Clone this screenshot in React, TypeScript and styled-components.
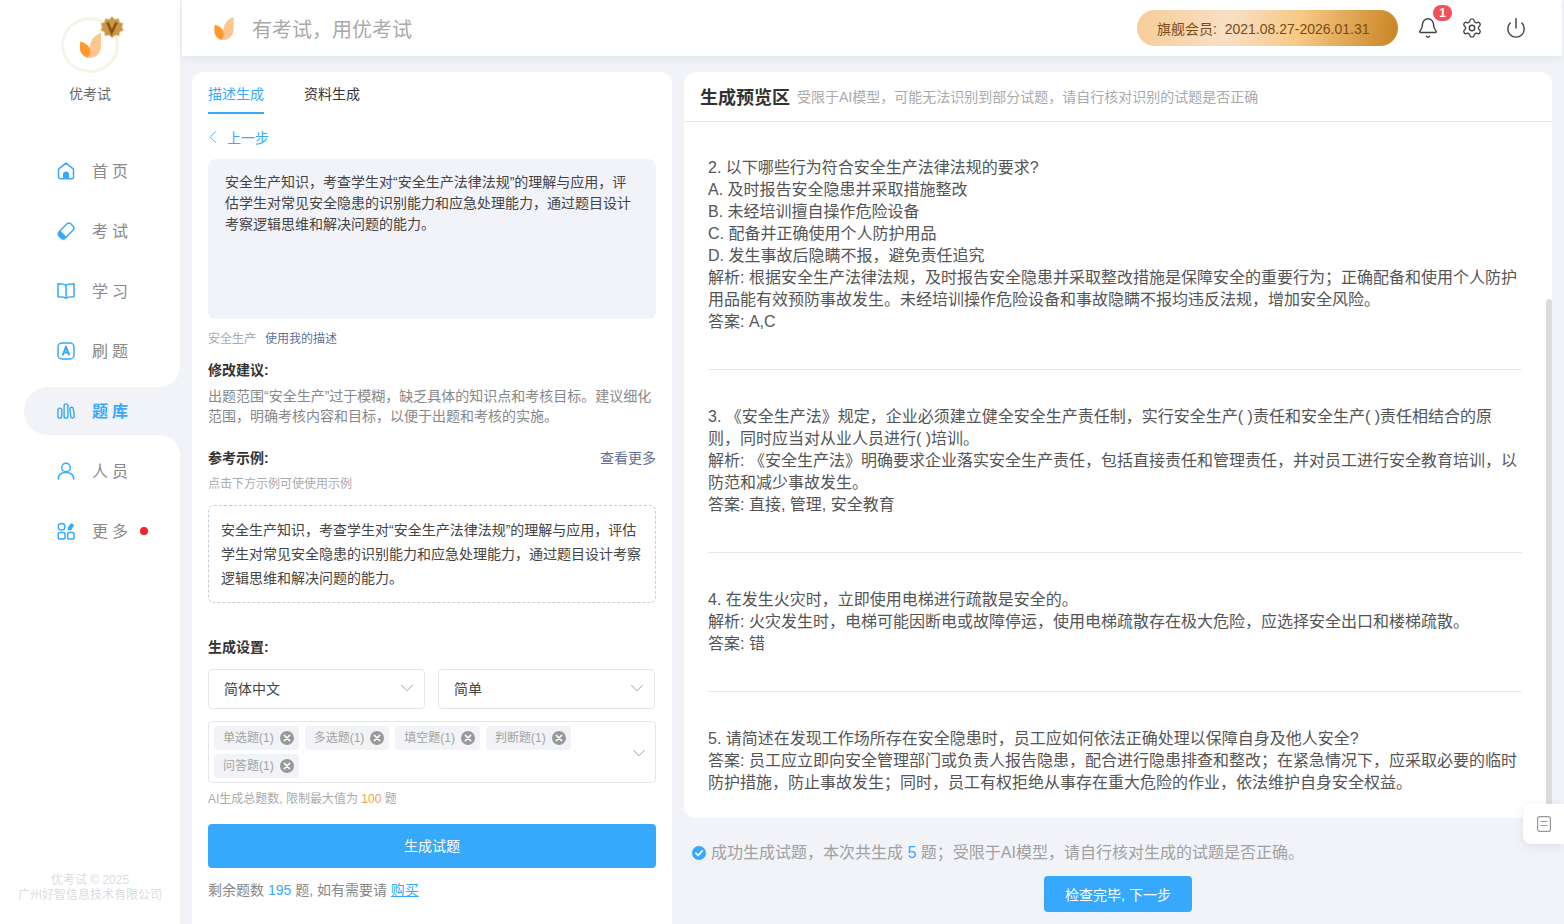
import React from 'react';
import styled, { createGlobalStyle } from 'styled-components';
import { Bell, Settings, Power, ChevronDown, ChevronLeft } from 'lucide-react';

const BLUE = '#36a9fd';
const PAGE = '#f1f3f8';

const Global = createGlobalStyle`
  html, body { margin: 0; padding: 0; height: 924px; overflow: hidden; background: ${PAGE}; }
  body { font-family: "Liberation Sans", "Noto Sans CJK SC", sans-serif; }
  * { box-sizing: border-box; }
`;

const Page = styled.div`
  display: flex;
  width: 1564px;
  height: 924px;
  position: relative;
  overflow: hidden;
`;

const Sidebar = styled.aside`
  width: 180px;
  flex: none;
  height: 924px;
  background: #fff;
  display: flex;
  flex-direction: column;
  padding-top: 17px;
`;

const LogoWrap = styled.div`
  align-self: center;
  width: 58px;
  height: 56px;
  border-radius: 50%;
  border: 3px solid #f8f2e8;
  display: flex;
  align-items: center;
  justify-content: center;
  position: relative;
`;

const Crown = styled.svg`
  position: absolute;
  right: -8px;
  top: -4px;
`;

const BrandName = styled.div`
  margin-top: 11px;
  text-align: center;
  font-size: 14px;
  line-height: 20px;
  color: #666;
`;

const Nav = styled.nav`
  margin-top: 43px;
  display: flex;
  flex-direction: column;
  gap: 12px;
`;

const NavItem = styled.div<{ $active?: boolean }>`
  position: relative;
  margin-left: 24px;
  height: 48px;
  padding-left: 33px;
  display: flex;
  align-items: center;
  gap: 17px;
  font-size: 16px;
  letter-spacing: 4px;
  color: ${p => (p.$active ? BLUE : '#8a8a8a')};
  font-weight: ${p => (p.$active ? 600 : 400)};
  border-radius: 24px 0 0 24px;
  background: ${p => (p.$active ? PAGE : 'transparent')};
  ${p =>
    p.$active
      ? `
    &::before, &::after {
      content: '';
      position: absolute;
      right: 0;
      width: 20px;
      height: 20px;
    }
    &::before { top: -20px; background: radial-gradient(circle at 0 0, #fff 19.5px, ${PAGE} 20px); }
    &::after { bottom: -20px; background: radial-gradient(circle at 0 100%, #fff 19.5px, ${PAGE} 20px); }
  `
      : ''}
`;

const NavLabel = styled.span`
  padding-bottom: 2px;
`;

const RedDot = styled.span`
  width: 8px;
  height: 8px;
  border-radius: 50%;
  background: #f5222d;
  margin-left: -9px;
`;

const SideFooter = styled.div`
  margin-top: auto;
  padding-bottom: 21px;
  text-align: center;
  font-size: 12px;
  line-height: 15px;
  color: #dcdcdc;
`;

const Main = styled.div`
  flex: 1;
  min-width: 0;
  display: flex;
  flex-direction: column;
`;

const Header = styled.header`
  height: 56px;
  margin: 0 2px;
  background: #fff;
  box-shadow: 0 2px 8px rgba(40, 50, 90, 0.08);
  display: flex;
  align-items: center;
  padding: 0 34px 0 32px;
  position: relative;
`;

const HeaderTitle = styled.div`
  margin-left: 18px;
  font-size: 20px;
  color: #aaa;
`;

const Pill = styled.div`
  margin-left: auto;
  width: 261px;
  height: 36px;
  border-radius: 18px;
  padding-left: 20px;
  display: flex;
  align-items: center;
  font-size: 14px;
  white-space: pre;
  color: #7b4b16;
  background: linear-gradient(100deg, #f6cd96 0%, #f8dfc6 35%, #f6c985 62%, #c98322 100%);
`;

const HeaderIcons = styled.div`
  margin-left: 18px;
  display: flex;
  gap: 20px;
`;

const IconBtn = styled.div`
  position: relative;
  width: 24px;
  height: 24px;
  color: #444;
  display: flex;
  align-items: center;
  justify-content: center;
`;

const Badge = styled.span`
  position: absolute;
  left: 17px;
  top: -11px;
  width: 19px;
  height: 16px;
  border-radius: 8px;
  background: #f4505b;
  color: #fff;
  font-size: 12px;
  font-weight: 700;
  line-height: 16px;
  text-align: center;
`;

const Body = styled.div`
  flex: 1;
  min-height: 0;
  display: flex;
  gap: 12px;
  padding: 16px 12px 0;
`;

const LeftPanel = styled.section`
  width: 480px;
  flex: none;
  background: #fff;
  border-radius: 12px 12px 0 0;
  padding: 0 16px;
  display: flex;
  flex-direction: column;
`;

const Tabs = styled.div`
  display: flex;
  gap: 40px;
`;

const Tab = styled.div<{ $active?: boolean }>`
  height: 42px;
  padding-top: 12px;
  font-size: 14px;
  line-height: 20px;
  color: ${p => (p.$active ? BLUE : '#333')};
  border-bottom: 2px solid ${p => (p.$active ? BLUE : 'transparent')};
`;

const Back = styled.div`
  margin: 13px 0 0 -6px;
  height: 20px;
  display: flex;
  align-items: center;
  gap: 3px;
  font-size: 14px;
  color: ${BLUE};
`;

const Desc = styled.div`
  margin-top: 12px;
  height: 160px;
  background: ${PAGE};
  border-radius: 8px;
  padding: 13px 16px 12px 17px;
  font-size: 14px;
  line-height: 21px;
  color: #444;
`;

const MetaRow = styled.div`
  margin-top: 11px;
  display: flex;
  gap: 9px;
  font-size: 12px;
  line-height: 18px;
  color: #aaa;
`;

const MetaLink = styled.span`
  color: #5f7198;
`;

const SectionTitle = styled.div<{ $mt: number }>`
  margin-top: ${p => p.$mt}px;
  display: flex;
  justify-content: space-between;
  font-size: 14px;
  line-height: 20px;
  font-weight: 700;
  color: #333;
`;

const MoreLink = styled.span`
  font-weight: 400;
  color: #5f7198;
`;

const Advice = styled.div`
  margin-top: 6px;
  font-size: 14px;
  line-height: 20px;
  color: #888;
`;

const Hint = styled.div<{ $mt: number }>`
  margin-top: ${p => p.$mt}px;
  font-size: 12px;
  line-height: 18px;
  color: #aaa;
`;

const Orange = styled.span`
  color: #f79b4a;
`;

const Example = styled.div`
  margin-top: 12px;
  height: 98px;
  border: 1px dashed #c9cbd6;
  border-radius: 6px;
  padding: 12px;
  font-size: 14px;
  line-height: 24px;
  color: #444;
`;

const SelectRow = styled.div`
  margin-top: 12px;
  display: flex;
  gap: 13px;
  width: 447px;
`;

const Select = styled.div`
  flex: 1;
  height: 40px;
  border: 1px solid #e4e6ea;
  border-radius: 4px;
  padding: 0 6px 2px 15px;
  display: flex;
  align-items: center;
  justify-content: space-between;
  font-size: 14px;
  color: #444;
`;

const Multi = styled.div`
  margin-top: 12px;
  height: 62px;
  border: 1px solid #e4e6ea;
  border-radius: 4px;
  padding: 4px 30px 4px 5px;
  display: flex;
  flex-wrap: wrap;
  align-content: flex-start;
  gap: 4px 6px;
  position: relative;
`;

const MultiArrow = styled.span`
  position: absolute;
  right: 5px;
  top: 20px;
  display: flex;
`;

const TagChip = styled.div`
  height: 24px;
  background: #f2f3f6;
  border-radius: 4px;
  padding: 0 5px 0 9px;
  display: flex;
  align-items: center;
  gap: 6px;
  font-size: 12px;
  color: #a3a3a3;
`;

const TagLabel = styled.span`
  padding-bottom: 3px;
`;

const PrimaryBlock = styled.button`
  margin-top: 16px;
  height: 44px;
  width: 100%;
  border: 0;
  border-radius: 4px;
  padding: 0 0 2px;
  background: ${BLUE};
  color: #fff;
  font: inherit;
  font-size: 14px;
`;

const Remain = styled.div`
  margin-top: 12px;
  font-size: 14px;
  line-height: 20px;
  color: #888;
`;

const Blue = styled.span`
  color: ${BLUE};
`;

const BuyLink = styled.a`
  color: ${BLUE};
  text-decoration: underline;
`;

const RightCol = styled.section`
  width: 868px;
  flex: none;
  display: flex;
  flex-direction: column;
`;

const PreviewCard = styled.div`
  height: 746px;
  background: #fff;
  border-radius: 12px;
  overflow: hidden;
  position: relative;
  flex: none;
`;

const PreviewHead = styled.div`
  height: 50px;
  border-bottom: 1px solid #e8e8e8;
  padding: 0 16px 2px;
  display: flex;
  align-items: center;
  gap: 7px;
`;

const PreviewTitle = styled.div`
  font-size: 18px;
  font-weight: 700;
  color: #333;
`;

const PreviewSub = styled.div`
  font-size: 14px;
  color: #aaa;
  margin-top: 1px;
`;

const PreviewList = styled.div`
  padding: 0 30px 0 24px;
  margin-top: -1px;
`;

const Question = styled.div<{ $last?: boolean }>`
  padding: 36px 0 36px;
  border-bottom: ${p => (p.$last ? '0' : '1px solid #e8e8e8')};
  font-size: 16px;
  line-height: 22px;
  color: #555;
`;

const Thumb = styled.div`
  position: absolute;
  right: 0;
  top: 227px;
  bottom: 0;
  width: 6px;
  border-radius: 3px 3px 0 0;
  background: #dcdcdc;
`;

const Status = styled.div`
  margin: 24px 0 0 8px;
  display: flex;
  align-items: center;
  gap: 5px;
  font-size: 16px;
  line-height: 22px;
  color: #a0a0a0;
`;

const NextBtn = styled.button`
  margin-top: 12px;
  align-self: center;
  width: 148px;
  height: 36px;
  border: 0;
  border-radius: 4px;
  background: ${BLUE};
  color: #fff;
  font: inherit;
  font-size: 14px;
`;

const FloatTab = styled.div`
  position: absolute;
  right: 0;
  top: 804px;
  width: 41px;
  height: 40px;
  background: #fff;
  border-radius: 8px 0 0 8px;
  box-shadow: 0 2px 10px rgba(40, 50, 90, 0.1);
  display: flex;
  align-items: center;
  justify-content: center;
`;

const Leaf = ({ w, h }: { w: number; h: number }) => (
  <svg width={w} height={h} viewBox="0 0 21 25">
    <path d="M21 0V13C21 20 16 25 10 25C7 25 5 24 4 22.5C9 19 9.5 14 11 9C12.5 4.5 16.5 1.5 21 0Z" fill="#ffc78f" />
    <path d="M0.3 8.5C5 9.5 10 13 10.3 18C10.5 21 9 23.5 7.5 24.5C3 23.5 0 20 0 15C0 13 0 10.5 0.3 8.5Z" fill="#ff9a30" />
  </svg>
);

const blueStroke = { fill: 'none', stroke: BLUE, strokeWidth: 1.5, strokeLinecap: 'round' as const, strokeLinejoin: 'round' as const };

const HomeIcon = () => (
  <svg width="18" height="18" viewBox="0 0 18 18">
    <path d="M1.5 7.2L9 1.2L16.5 7.2V15a1.8 1.8 0 0 1-1.8 1.8H3.3A1.8 1.8 0 0 1 1.5 15Z" {...blueStroke} />
    <path d="M6 16.8V12.5a3 3 0 0 1 6 0v4.3Z" fill={BLUE} />
  </svg>
);
const EraserIcon = () => (
  <svg width="18" height="18" viewBox="0 0 18 18">
    <g transform="rotate(-45 9 9)">
      <rect x="0.6" y="4.6" width="16.8" height="8.8" rx="3" {...blueStroke} />
      <path d="M3.6 4.6H5.2V13.4H3.6A3 3 0 0 1 0.6 10.4V7.6A3 3 0 0 1 3.6 4.6Z" fill={BLUE} />
    </g>
  </svg>
);
const BookIcon = () => (
  <svg width="18" height="18" viewBox="0 0 18 18">
    <path d="M9 3.2C7.5 2 5 1.8 1 1.8V14.8C5 14.8 7.5 15 9 16.2C10.5 15 13 14.8 17 14.8V1.8C13 1.8 10.5 2 9 3.2ZM9 3.2V16.2" {...blueStroke} />
  </svg>
);
const PracticeIcon = () => (
  <svg width="18" height="18" viewBox="0 0 18 18">
    <rect x="1" y="1" width="16" height="16" rx="4" {...blueStroke} />
    <path d="M5.7 13.3L9 4.8L12.3 13.3M6.9 10.6H11.1" fill="none" stroke={BLUE} strokeWidth="2" strokeLinejoin="round" />
  </svg>
);
const BarsIcon = () => (
  <svg width="18" height="18" viewBox="0 0 19 18">
    <rect x="1" y="6" width="4" height="10.5" rx="2" {...blueStroke} />
    <rect x="7.5" y="1.5" width="4" height="15" rx="2" {...blueStroke} />
    <rect x="14" y="5" width="3.6" height="11.5" rx="1.8" transform="rotate(-7 15.8 10)" {...blueStroke} />
  </svg>
);
const PersonIcon = () => (
  <svg width="18" height="18" viewBox="0 0 18 18">
    <circle cx="9" cy="5.5" r="4.3" {...blueStroke} />
    <path d="M1.2 17C1.5 12.8 4.8 10.5 9 10.5S16.5 12.8 16.8 17" {...blueStroke} />
  </svg>
);
const MoreIcon = () => (
  <svg width="18" height="18" viewBox="0 0 18 18">
    <circle cx="4.6" cy="4.8" r="3.3" {...blueStroke} />
    <rect x="1.2" y="10.5" width="6.8" height="6.5" rx="1.8" {...blueStroke} />
    <rect x="10.6" y="10.5" width="6.4" height="6.5" rx="1.8" {...blueStroke} />
    <path d="M14 1.2L17.3 3L14 8.3H10.8V5.5Z" fill={BLUE} />
  </svg>
);

const CloseDot = () => (
  <svg width="14" height="14" viewBox="0 0 14 14">
    <circle cx="7" cy="7" r="7" fill="#999" />
    <path d="M4.4 4.4L9.6 9.6M9.6 4.4L4.4 9.6" stroke="#fff" strokeWidth="1.5" strokeLinecap="round" />
  </svg>
);

const CheckDot = () => (
  <svg width="14" height="14" viewBox="0 0 14 14">
    <circle cx="7" cy="7" r="7" fill={BLUE} />
    <path d="M3.8 7.2L6.2 9.5L10.3 4.9" fill="none" stroke="#fff" strokeWidth="1.6" strokeLinecap="round" strokeLinejoin="round" />
  </svg>
);

const navItems = [
  { label: '首页', icon: <HomeIcon /> },
  { label: '考试', icon: <EraserIcon /> },
  { label: '学习', icon: <BookIcon /> },
  { label: '刷题', icon: <PracticeIcon /> },
  { label: '题库', icon: <BarsIcon />, active: true },
  { label: '人员', icon: <PersonIcon /> },
  { label: '更多', icon: <MoreIcon />, dot: true },
];

const tags = ['单选题(1)', '多选题(1)', '填空题(1)', '判断题(1)', '问答题(1)'];

const questions = [
  [
    '2. 以下哪些行为符合安全生产法律法规的要求?',
    'A. 及时报告安全隐患并采取措施整改',
    'B. 未经培训擅自操作危险设备',
    'C. 配备并正确使用个人防护用品',
    'D. 发生事故后隐瞒不报，避免责任追究',
    '解析: 根据安全生产法律法规，及时报告安全隐患并采取整改措施是保障安全的重要行为；正确配备和使用个人防护用品能有效预防事故发生。未经培训操作危险设备和事故隐瞒不报均违反法规，增加安全风险。',
    '答案: A,C',
  ],
  [
    '3. 《安全生产法》规定，企业必须建立健全安全生产责任制，实行安全生产( )责任和安全生产( )责任相结合的原则，同时应当对从业人员进行( )培训。',
    '解析: 《安全生产法》明确要求企业落实安全生产责任，包括直接责任和管理责任，并对员工进行安全教育培训，以防范和减少事故发生。',
    '答案: 直接, 管理, 安全教育',
  ],
  [
    '4. 在发生火灾时，立即使用电梯进行疏散是安全的。',
    '解析: 火灾发生时，电梯可能因断电或故障停运，使用电梯疏散存在极大危险，应选择安全出口和楼梯疏散。',
    '答案: 错',
  ],
  [
    '5. 请简述在发现工作场所存在安全隐患时，员工应如何依法正确处理以保障自身及他人安全?',
    '答案: 员工应立即向安全管理部门或负责人报告隐患，配合进行隐患排查和整改；在紧急情况下，应采取必要的临时防护措施，防止事故发生；同时，员工有权拒绝从事存在重大危险的作业，依法维护自身安全权益。',
  ],
];

export default function App() {
  return (
    <Page>
      <Global />
      <Sidebar>
        <LogoWrap>
          <Leaf w={21} h={25} />
          <Crown width="24" height="24" viewBox="0 0 24 24">
            <path
              d="M12 0.5L14.8 3.3L18.6 2.4L19.6 6.2L23.3 7.4L22 11L23.5 14.5L20 16L19.2 19.9L15.3 19.3L12 22L9 19.3L5 19.9L4.3 16L0.6 14.4L2 11L0.7 7.4L4.4 6.2L5.4 2.4L9.2 3.3Z"
              fill="#c9974a"
              stroke="#ecd5a6"
              strokeWidth="1"
            />
            <path d="M7.5 6.5L11.7 16.5L16.5 6.5" fill="none" stroke="#8a5310" strokeWidth="2.6" />
          </Crown>
        </LogoWrap>
        <BrandName>优考试</BrandName>
        <Nav>
          {navItems.map(item => (
            <NavItem key={item.label} $active={item.active}>
              {item.icon}
              <NavLabel>{item.label}</NavLabel>
              {item.dot && <RedDot />}
            </NavItem>
          ))}
        </Nav>
        <SideFooter>
          优考试 © 2025
          <br />
          广州好智信息技术有限公司
        </SideFooter>
      </Sidebar>
      <Main>
        <Header>
          <Leaf w={20} h={23} />
          <HeaderTitle>有考试，用优考试</HeaderTitle>
          <Pill>旗舰会员:  2021.08.27-2026.01.31</Pill>
          <HeaderIcons>
            <IconBtn>
              <Bell size={22} strokeWidth={1.6} />
              <Badge>1</Badge>
            </IconBtn>
            <IconBtn>
              <Settings size={22} strokeWidth={1.5} />
            </IconBtn>
            <IconBtn>
              <Power size={22} strokeWidth={1.6} />
            </IconBtn>
          </HeaderIcons>
        </Header>
        <Body>
          <LeftPanel>
            <Tabs>
              <Tab $active>描述生成</Tab>
              <Tab>资料生成</Tab>
            </Tabs>
            <Back>
              <ChevronLeft size={22} strokeWidth={1} />
              上一步
            </Back>
            <Desc>安全生产知识，考查学生对“安全生产法律法规”的理解与应用，评估学生对常见安全隐患的识别能力和应急处理能力，通过题目设计考察逻辑思维和解决问题的能力。</Desc>
            <MetaRow>
              <span>安全生产</span>
              <MetaLink>使用我的描述</MetaLink>
            </MetaRow>
            <SectionTitle $mt={12}>修改建议:</SectionTitle>
            <Advice>出题范围“安全生产”过于模糊，缺乏具体的知识点和考核目标。建议细化范围，明确考核内容和目标，以便于出题和考核的实施。</Advice>
            <SectionTitle $mt={22}>
              参考示例:
              <MoreLink>查看更多</MoreLink>
            </SectionTitle>
            <Hint $mt={7}>点击下方示例可使使用示例</Hint>
            <Example>安全生产知识，考查学生对“安全生产法律法规”的理解与应用，评估学生对常见安全隐患的识别能力和应急处理能力，通过题目设计考察逻辑思维和解决问题的能力。</Example>
            <SectionTitle $mt={34}>生成设置:</SectionTitle>
            <SelectRow>
              <Select>
                简体中文
                <ChevronDown size={22} strokeWidth={1} color="#999" />
              </Select>
              <Select>
                简单
                <ChevronDown size={22} strokeWidth={1} color="#999" />
              </Select>
            </SelectRow>
            <Multi>
              {tags.map(t => (
                <TagChip key={t}>
                  <TagLabel>{t}</TagLabel>
                  <CloseDot />
                </TagChip>
              ))}
              <MultiArrow>
                <ChevronDown size={22} strokeWidth={1} color="#999" />
              </MultiArrow>
            </Multi>
            <Hint $mt={7}>
              AI生成总题数, 限制最大值为 <Orange>100</Orange> 题
            </Hint>
            <PrimaryBlock>生成试题</PrimaryBlock>
            <Remain>
              剩余题数 <Blue>195</Blue> 题, 如有需要请 <BuyLink>购买</BuyLink>
            </Remain>
          </LeftPanel>
          <RightCol>
            <PreviewCard>
              <PreviewHead>
                <PreviewTitle>生成预览区</PreviewTitle>
                <PreviewSub>受限于AI模型，可能无法识别到部分试题，请自行核对识别的试题是否正确</PreviewSub>
              </PreviewHead>
              <PreviewList>
                {questions.map((q, i) => (
                  <Question key={i} $last={i === questions.length - 1}>
                    {q.map(line => (
                      <div key={line}>{line}</div>
                    ))}
                  </Question>
                ))}
              </PreviewList>
              <Thumb />
            </PreviewCard>
            <Status>
              <CheckDot />
              <span>
                成功生成试题，本次共生成 <Blue>5</Blue> 题；受限于AI模型，请自行核对生成的试题是否正确。
              </span>
            </Status>
            <NextBtn>检查完毕, 下一步</NextBtn>
          </RightCol>
        </Body>
      </Main>
      <FloatTab>
        <svg width="14" height="16" viewBox="0 0 14 16">
          <rect x="0.6" y="0.6" width="12.8" height="14.8" rx="2" fill="none" stroke="#999" strokeWidth="1.2" />
          <path d="M3.5 5.5H10.5M3.5 9.5H10.5" stroke="#999" strokeWidth="1.2" />
        </svg>
      </FloatTab>
    </Page>
  );
}
